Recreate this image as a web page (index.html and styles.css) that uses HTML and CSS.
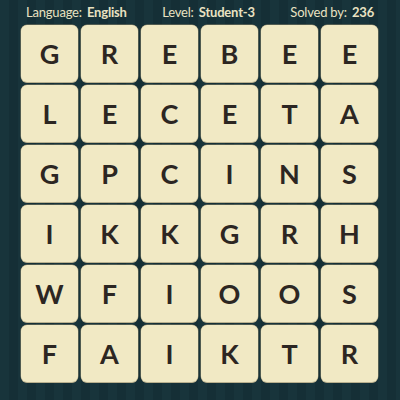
FILE: index.html
```html
<!DOCTYPE html>
<html>
<head>
<meta charset="utf-8">
<link rel="stylesheet" href="styles.css">
</head>
<body>
<div class="page">
  <div class="header">
    <span class="item">Language: <b>English</b></span>
    <span class="item">Level: <b>Student-3</b></span>
    <span class="item">Solved by: <b>236</b></span>
  </div>
  <div class="board">
    <div class="tile">G</div><div class="tile">R</div><div class="tile">E</div><div class="tile">B</div><div class="tile">E</div><div class="tile">E</div>
    <div class="tile">L</div><div class="tile">E</div><div class="tile">C</div><div class="tile">E</div><div class="tile">T</div><div class="tile">A</div>
    <div class="tile">G</div><div class="tile">P</div><div class="tile">C</div><div class="tile">I</div><div class="tile">N</div><div class="tile">S</div>
    <div class="tile">I</div><div class="tile">K</div><div class="tile">K</div><div class="tile">G</div><div class="tile">R</div><div class="tile">H</div>
    <div class="tile">W</div><div class="tile">F</div><div class="tile">I</div><div class="tile">O</div><div class="tile">O</div><div class="tile">S</div>
    <div class="tile">F</div><div class="tile">A</div><div class="tile">I</div><div class="tile">K</div><div class="tile">T</div><div class="tile">R</div>
  </div>
</div>
</body>
</html>
```
FILE: styles.css
```css
html, body {
  margin: 0;
  padding: 0;
}
body {
  width: 400px;
  height: 400px;
  overflow: hidden;
  background-color: #17323a;
  background-image: repeating-linear-gradient(90deg, #18343b 0px, #18343b 9px, #152f36 9px, #152f36 18px);
  font-family: "Lato", "Noto Sans", sans-serif;
}
.page {
  display: flex;
  flex-direction: column;
}
.header {
  height: 24px;
  display: flex;
  justify-content: space-between;
  align-items: center;
  padding: 0 26px 0 26px;
  color: #e9e2c2;
  font-size: 13px;
  letter-spacing: -0.2px;
  line-height: 1;
}
.header b {
  font-weight: 700;
  margin-left: 2px;
}
.board {
  display: grid;
  grid-template-columns: repeat(6, 57px);
  grid-auto-rows: 57px;
  gap: 3px;
  padding: 1px 0 0 21px;
}
.tile {
  background: #f1e9c4;
  border-radius: 6px;
  box-shadow: 0 1px 0 #b9b08e, 0 0 0 0.5px #8a8468;
  display: flex;
  align-items: center;
  justify-content: center;
  color: #2c2622;
  font-size: 27px;
  font-weight: 700;
}
```
